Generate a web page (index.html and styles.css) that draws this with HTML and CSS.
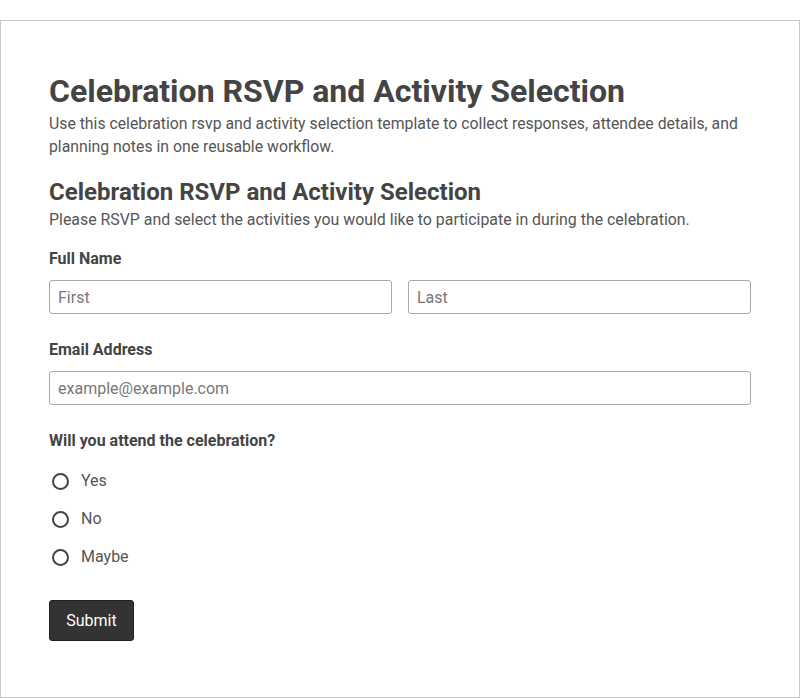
FILE: index.html
```html
<!DOCTYPE html>
<html lang="en">
<head>
    <meta charset="UTF-8">
    <meta name="viewport" content="width=device-width, initial-scale=1.0">
    <title>Celebration RSVP and Activity Selection</title>
    <link rel="stylesheet" href="styles.css">
</head>
<body>
    <div class="sheet">
        <h1 class="page-title">Celebration RSVP and Activity Selection</h1>
        <p class="page-intro">Use this celebration rsvp and activity selection template to collect responses, attendee details, and planning notes in one reusable workflow.</p>

        <form class="rsvp-form" onsubmit="return false;">
            <h2 class="form-title">Celebration RSVP and Activity Selection</h2>
            <p class="form-desc">Please RSVP and select the activities you would like to participate in during the celebration.</p>

            <div class="field">
                <label class="field-label">Full Name</label>
                <div class="name-row">
                    <input type="text" placeholder="First">
                    <input type="text" placeholder="Last">
                </div>
            </div>

            <div class="field">
                <label class="field-label" for="email">Email Address</label>
                <input type="email" id="email" placeholder="example@example.com">
            </div>

            <div class="field">
                <span class="field-label">Will you attend the celebration?</span>
                <div class="radio-list">
                    <label class="radio"><input type="radio" name="attend"> <span>Yes</span></label>
                    <label class="radio"><input type="radio" name="attend"> <span>No</span></label>
                    <label class="radio"><input type="radio" name="attend"> <span>Maybe</span></label>
                </div>
            </div>

            <button type="submit" class="submit-button">Submit</button>
        </form>
    </div>
</body>
</html>
```

FILE: styles.css
```css
body {
    font-family: Roboto, "Liberation Sans", Arial, sans-serif;
    color: #444;
    margin: 0;
    padding: 20px 0 0 0;
    background: white;
}
.sheet {
    border: 1px solid #c8c8c8;
    padding: 49px 48px 48px 48px;
    height: 678px;
    box-sizing: border-box;
}
.page-title {
    font-size: 32px;
    font-weight: 700;
    line-height: 42px;
    margin: 0;
}
.page-intro {
    font-size: 15.8px;
    line-height: 23px;
    color: #555;
    margin: 0 0 18px 0;
}
.form-title {
    font-size: 24px;
    font-weight: 700;
    line-height: 32px;
    margin: 0;
}
.form-desc {
    font-size: 15.9px;
    line-height: 24px;
    color: #555;
    margin: 0 0 16px 0;
}
.field {
    margin-bottom: 25px;
}
.field-label {
    display: block;
    font-size: 16px;
    font-weight: 700;
    line-height: 22px;
    margin-bottom: 10px;
}
.name-row {
    display: flex;
    gap: 16px;
}
.field input[type="text"],
.field input[type="email"] {
    width: 100%;
    height: 34px;
    box-sizing: border-box;
    border: 1px solid #aaa;
    border-radius: 3px;
    padding: 0 8px;
    font-family: inherit;
    font-size: 16px;
    color: #444;
}
.field input::placeholder {
    color: #777;
}
.radio-list {
    display: flex;
    flex-direction: column;
    gap: 16px;
    padding-top: 8px;
}
.radio {
    display: flex;
    align-items: center;
    gap: 12px;
    font-size: 16px;
    line-height: 22px;
    color: #555;
}
.radio input {
    appearance: none;
    width: 17px;
    height: 17px;
    margin: 0 0 0 3px;
    border: 2px solid #444;
    border-radius: 50%;
    box-sizing: border-box;
}
.submit-button {
    background-color: #333;
    color: white;
    border: 1px solid #222;
    border-radius: 3px;
    font-family: inherit;
    font-size: 16px;
    height: 41px;
    width: 85px;
    padding: 0;
    margin-top: 7px;
    cursor: pointer;
}
```
